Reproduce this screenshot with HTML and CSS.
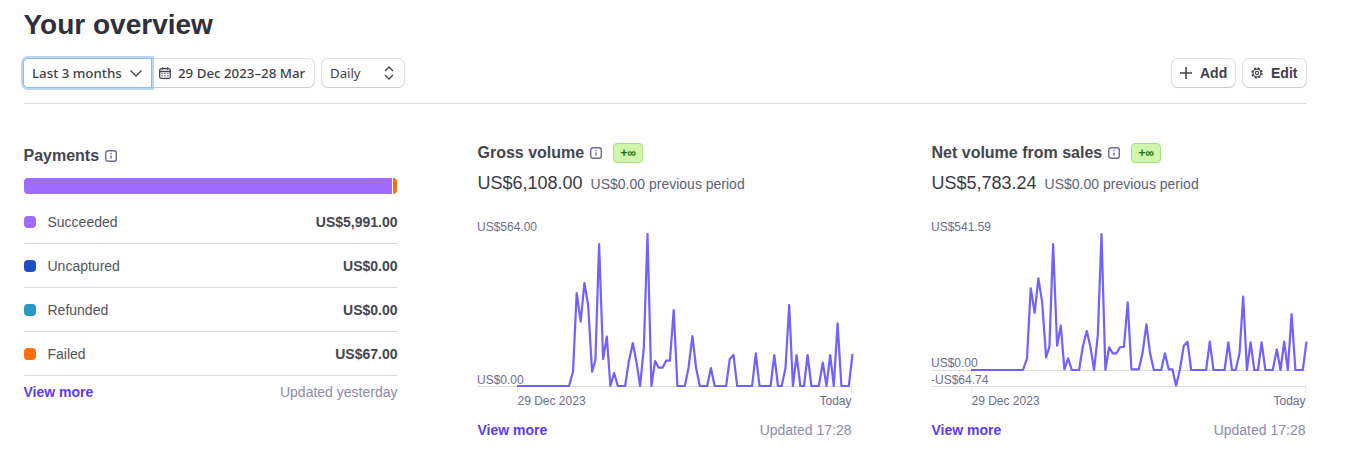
FILE: index.html
```html
<!DOCTYPE html>
<html lang='en'>
	<head>
		<meta charset='utf-8' />
		<title>Your overview</title>
		<link rel="stylesheet" href="styles.css">
	</head>
	<body>
		<div id="divContent">
			<h1>Your overview</h1>
			<div class="toolbar">
				<div class="filters">
					<button class="btn btnRange">Last 3 months
						<svg class="chevron" width="14" height="14" viewBox="0 0 14 14"><path d="M1.500 4.500 7 10l5.500-5.500" /></svg>
					</button>
					<button class="btn btnDate">
						<svg class="calendar" width="12" height="12" viewBox="0 0 12 12"><rect x=".7" y="1.700" width="10.600" height="9.600" rx="1.500" /><path d="M.7 4.500h10.600M3.500.3v2.400M8.500.3v2.400" /><path class="calendarDots" d="M2.500 6.500h7M2.500 8.800h7" /></svg>
						29 Dec 2023–28 Mar
					</button>
					<button class="btn btnDaily">Daily
						<svg class="updown" width="10" height="14" viewBox="0 0 10 14"><path d="M1 5 5 1l4 4M1 9l4 4 4-4" /></svg>
					</button>
				</div>
				<div class="actions">
					<button class="btn btnAction btnAdd">
						<svg class="plus" width="14" height="14" viewBox="0 0 14 14"><path d="M7 1v12M1 7h12" /></svg>
						Add
					</button>
					<button class="btn btnAction btnEdit">
						<svg class="gear" width="12" height="12" viewBox="0 0 12 12"><circle cx="6" cy="6" r="1.600" /><circle cx="6" cy="6" r="3.900" /><circle class="gearTeeth" cx="6" cy="6" r="5" /></svg>
						Edit
					</button>
				</div>
			</div>
			<div class="cards">
				<section class="card cardPayments">
					<h2>Payments
						<svg class="info" width="12" height="12" viewBox="0 0 12 12"><rect x=".7" y=".7" width="10.600" height="10.600" rx="2.400" /><path d="M6 5.400v3" /><circle class="infoDot" cx="6" cy="3.600" r=".8" /></svg>
					</h2>
					<div class="bar">
						<div class="barSucceeded"></div>
						<div class="barFailed"></div>
					</div>
					<div class="row"><span class="dot dotSucceeded"></span><span class="rowLabel">Succeeded</span><span class="rowValue">US$5,991.00</span></div>
					<div class="row"><span class="dot dotUncaptured"></span><span class="rowLabel">Uncaptured</span><span class="rowValue">US$0.00</span></div>
					<div class="row"><span class="dot dotRefunded"></span><span class="rowLabel">Refunded</span><span class="rowValue">US$0.00</span></div>
					<div class="row"><span class="dot dotFailed"></span><span class="rowLabel">Failed</span><span class="rowValue">US$67.00</span></div>
					<div class="cardFooter footerPayments">
						<a href="#">View more</a>
						<span class="footerNote">Updated yesterday</span>
					</div>
				</section>
				<section class="card">
					<h2>Gross volume
						<svg class="info" width="12" height="12" viewBox="0 0 12 12"><rect x=".7" y=".7" width="10.600" height="10.600" rx="2.400" /><path d="M6 5.400v3" /><circle class="infoDot" cx="6" cy="3.600" r=".8" /></svg>
						<span class="badge">+∞</span>
					</h2>
					<div class="total"><span class="amount">US$6,108.00</span><span class="previous">US$0.00 previous period</span></div>
					<svg class="chart" width="374" height="192" viewBox="0 0 374 192">
						<path class="axis" d="M0 170.500H374" />
						<path class="tick" d="M39.500 171v6M373.500 171v6" />
						<polyline class="line" points="39,170 91,170 95,155.700 98.700,77 102.700,105.700 106.400,67 110.100,89 114.100,155.700 117.400,144 121.100,28 125.100,143 128.800,120.700 132.400,170 136.100,157 139.800,170 147.100,170 150.800,145.700 154.800,127 158.400,145.700 162.100,170 165.800,132 169.500,18 173.400,170 177.100,145 180.800,151.700 184.500,151.700 188.200,144.700 191.900,144.700 195.700,94 199.400,170 206.800,170 210.500,152 214.400,120 218.100,152 221.800,170 229.200,170 232.900,152 236.700,170 248.100,170 251.800,143 255.500,139 259.200,170 274.100,170 277.800,137.300 281.500,170 292.600,170 296.300,139 300,170 303.700,170 307.500,152 311.200,89 314.900,170 318.600,139 322.300,170 326,170 329.600,139 333.400,170 340.800,170 344.800,146.700 348.500,170 352.200,139 355.800,170 359.600,107.300 363.400,170 370.800,170 374.500,138" />
						<text class="chartLabel" x="-1" y="14.500">US$564.00</text>
						<text class="chartLabel" x="-1" y="167.500">US$0.00</text>
						<text class="chartLabel" x="39.500" y="188.500">29 Dec 2023</text>
						<text class="chartLabel chartEnd" x="373.500" y="188.500">Today</text>
					</svg>
					<div class="cardFooter">
						<a href="#">View more</a>
						<span>Updated 17:28</span>
					</div>
				</section>
				<section class="card">
					<h2>Net volume from sales
						<svg class="info" width="12" height="12" viewBox="0 0 12 12"><rect x=".7" y=".7" width="10.600" height="10.600" rx="2.400" /><path d="M6 5.400v3" /><circle class="infoDot" cx="6" cy="3.600" r=".8" /></svg>
						<span class="badge">+∞</span>
					</h2>
					<div class="total"><span class="amount">US$5,783.24</span><span class="previous">US$0.00 previous period</span></div>
					<svg class="chart" width="374" height="192" viewBox="0 0 374 192">
						<path class="axis" d="M0 154.500H374M0 170.500H374" />
						<path class="tick" d="M39.500 171v6M373.500 171v6" />
						<polyline class="line" points="39,154 91,154 95,142.300 98.700,72.300 102.700,96.700 106.400,62.300 110.100,85.700 114.100,141.300 117.400,130.700 121.100,28 125.100,129.700 128.800,109.700 132.400,153.300 136.100,142.300 139.800,154 147.100,154 150.800,130.700 154.800,115 158.400,130.700 162.100,154 165.800,119 169.500,18 173.400,154 177.100,131.300 180.800,137.300 184.500,137.300 188.200,131 191.900,131 195.700,86.300 199.400,153.300 206.800,153.300 210.500,137.300 214.400,108.300 218.100,137.300 221.800,154 229.200,154 232.900,137.300 236.700,153.300 240.400,153.300 244.100,169.700 247.800,154 251.800,129.700 255.500,125.700 259.200,154 274.100,154 277.800,125.700 281.500,154 292.600,154 296.300,126.300 300,154 303.700,154 307.500,137.300 311.200,80.700 314.900,154 318.600,126.300 322.300,154 326,154 329.600,126.300 333.400,154 340.800,154 344.800,133.300 348.500,154 352.200,125.700 355.800,154 359.600,98 363.400,154 370.800,154 374.500,125.700" />
						<text class="chartLabel" x="-1" y="14.500">US$541.59</text>
						<text class="chartLabel" x="-1" y="150.500">US$0.00</text>
						<text class="chartLabel" x="-1" y="167.500">-US$64.74</text>
						<text class="chartLabel" x="39.500" y="188.500">29 Dec 2023</text>
						<text class="chartLabel chartEnd" x="373.500" y="188.500">Today</text>
					</svg>
					<div class="cardFooter">
						<a href="#">View more</a>
						<span>Updated 17:28</span>
					</div>
				</section>
			</div>
		</div>
	</body>
</html>
```

FILE: styles.css
```css
body {
	margin: 0px;
	background: #fefefe;
	font-family: "Liberation Sans", Arial, sans-serif;
	color: #53545f;
	height: 450px;
	overflow: hidden;
}
#divContent {
	width: 1282px;
	margin-left: 23.5px;
	padding-top: 7px;
}
h1 {
	margin: 0px;
	font-size: 28px;
	line-height: 36px;
	font-weight: 700;
	color: #30303c;
}
.toolbar {
	display: flex;
	align-items: center;
	justify-content: space-between;
	margin-top: 15px;
	height: 30px;
	padding-bottom: 15px;
	border-bottom: 1px solid #d8d8e2;
}
.filters {
	display: flex;
	margin-left: 0.5px;
}
.actions {
	display: flex;
	gap: 8px;
	margin-right: -0.5px;
}
.btn {
	display: flex;
	align-items: center;
	height: 28px;
	margin: 0px;
	padding: 0px;
	border: 0px;
	border-radius: 6px;
	background: #fff;
	box-shadow: 0 0 0 1px rgba(64, 68, 82, 0.16), 0 1px 1px rgba(0, 0, 0, 0.10);
	font-family: "Noto Sans", sans-serif;
	font-size: 13.3px;
	font-weight: 500;
	color: #3f3f49;
	white-space: nowrap;
}
.btnRange {
	position: relative;
	z-index: 1;
	width: 127px;
	padding: 0 8px 0 8px;
	justify-content: space-between;
	border-radius: 4px 0 0 4px;
	box-shadow: 0 0 0 1px #8fbcec, 0 0 0 3px rgba(130, 180, 240, 0.55);
}
.btnDate {
	width: 163px;
	gap: 7px;
	padding-left: 8px;
	border-radius: 0 6px 6px 0;
}
.btnDaily {
	width: 82px;
	margin-left: 8px;
	padding: 0 10px 0 8px;
	justify-content: space-between;
	font-size: 13.2px;
	font-weight: 400;
}
.btnAction {
	width: 63px;
	font-family: "Liberation Sans", Arial, sans-serif;
	font-size: 14px;
	font-weight: 700;
}
.btnAdd {
	gap: 7px;
	padding-left: 7px;
}
.btnEdit {
	gap: 8px;
	padding-left: 8px;
}
.chevron, .calendar, .updown, .plus, .gear {
	fill: none;
	stroke: #45454f;
	stroke-width: 1.3;
}
.calendarDots {
	stroke-width: 1.2;
	stroke-dasharray: 1.200 1.700;
}
.plus {
	stroke-width: 1.6;
}
.gear {
	stroke-width: 1.1;
}
.gearTeeth {
	stroke-width: 1.4;
	stroke-dasharray: 2.200 1.727;
}
.cards {
	display: grid;
	grid-template-columns: 374px 374px 374px;
	gap: 80px;
	margin-top: 39px;
}
.cardPayments {
	width: 373.5px;
}
h2 {
	display: flex;
	align-items: center;
	height: 20px;
	margin: 0px;
	font-size: 16px;
	line-height: 20px;
	font-weight: 700;
	color: #45454f;
}
.cardPayments h2 {
	margin-top: 3px;
}
.info {
	margin-left: 6px;
	fill: none;
	stroke: #6c6a8c;
	stroke-width: 1.4;
}
.infoDot {
	fill: #6c6a8c;
	stroke: none;
}
.badge {
	display: flex;
	align-items: center;
	justify-content: center;
	width: 28px;
	height: 18px;
	margin-left: 11px;
	border: 1px solid #a9e27a;
	border-radius: 4px;
	background: #d2f5ae;
	font-size: 12px;
	font-weight: 700;
	color: #217005;
}
.bar {
	display: flex;
	gap: 1px;
	height: 16px;
	margin-top: 12px;
	margin-bottom: 6px;
	border-radius: 4px;
	overflow: hidden;
}
.barSucceeded {
	flex: 1;
	background: #a06bff;
}
.barFailed {
	width: 4px;
	background: #f96e0f;
}
.row {
	display: flex;
	align-items: center;
	height: 43px;
	border-bottom: 1px solid #d8d8e2;
	font-size: 14px;
}
.dot {
	width: 12px;
	height: 12px;
	margin-right: 12px;
	border-radius: 4px;
}
.dotSucceeded {
	background: #a06bff;
}
.dotUncaptured {
	background: #1f4fc4;
}
.dotRefunded {
	background: #2599c4;
}
.dotFailed {
	background: #f96e0f;
}
.rowLabel {
	flex: 1;
}
.rowValue {
	margin-right: -0.5px;
	font-weight: 700;
	color: #45454f;
}
.total {
	display: flex;
	align-items: baseline;
	gap: 8px;
	margin-top: 9px;
	line-height: 22px;
}
.amount {
	font-size: 18px;
	color: #3a3a44;
}
.previous {
	font-size: 14px;
	color: #5f6272;
}
.chart {
	display: block;
	margin-top: 21px;
	overflow: visible;
}
.axis {
	fill: none;
	stroke: #dcdce8;
	stroke-width: 1;
}
.tick {
	fill: none;
	stroke: #e8e8ee;
	stroke-width: 1;
}
.line {
	fill: none;
	stroke: #7161ff;
	stroke-width: 2.200;
	stroke-linejoin: round;
}
.chartLabel {
	font-size: 12px;
	fill: #6f6d90;
}
.chartEnd {
	text-anchor: end;
}
.cardFooter {
	display: flex;
	justify-content: space-between;
	margin-top: 13px;
	font-size: 14px;
	line-height: 18px;
	color: #8e8aad;
}
.footerPayments {
	margin-top: 7px;
}
.footerNote {
	margin-right: -0.5px;
}
.cardFooter a {
	font-weight: 700;
	color: #5b3cf0;
	text-decoration: none;
}
```
